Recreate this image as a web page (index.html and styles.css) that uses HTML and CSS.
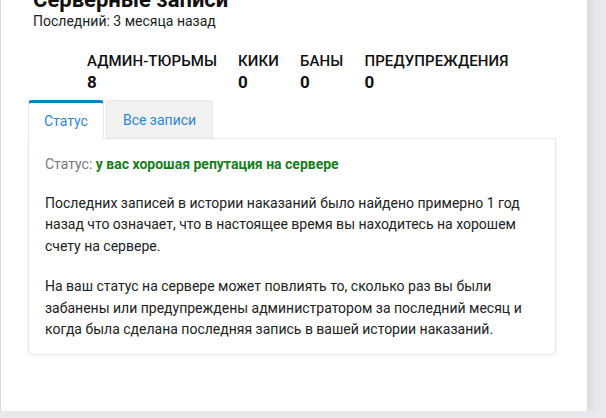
FILE: index.html
```html
<!DOCTYPE html>
<html lang="ru">
<head>
  <meta charset="UTF-8">
  <meta name="viewport" content="width=device-width, initial-scale=1.0">
  <title>Серверные записи</title>
  <link rel="stylesheet" href="styles.css">
</head>
<body>
    <div class="card">
        <h1>Серверные записи</h1>
        <p class="subtitle">Последний: 3 месяца назад</p>

        <!-- Punishment counters -->
        <div class="stats">
            <div class="stat">
                <span class="stat-label">Админ-тюрьмы</span>
                <span class="stat-value">8</span>
            </div>
            <div class="stat">
                <span class="stat-label">Кики</span>
                <span class="stat-value">0</span>
            </div>
            <div class="stat">
                <span class="stat-label">Баны</span>
                <span class="stat-value">0</span>
            </div>
            <div class="stat">
                <span class="stat-label">Предупреждения</span>
                <span class="stat-value">0</span>
            </div>
        </div>

        <!-- Tabs -->
        <div class="tabs">
            <button type="button" class="tab active">Статус</button>
            <button type="button" class="tab">Все записи</button>
        </div>

        <div class="tab-panel">
            <p class="status">Статус: <span class="status-good">у вас хорошая репутация на сервере</span></p>
            <p>Последних записей в истории наказаний было найдено примерно 1 год назад что означает, что в настоящее время вы находитесь на хорошем счету на сервере.</p>
            <p>На ваш статус на сервере может повлиять то, сколько раз вы были забанены или предупреждены администратором за последний месяц и когда была сделана последняя запись в вашей истории наказаний.</p>
        </div>
    </div>
</body>
</html>
```

FILE: styles.css
```css
/* General Styling */
body {
    font-family: 'Roboto', 'Liberation Sans', sans-serif;
    background-color: #e8e9ed;
    margin: 0;
    padding: 0 19px 0 1px;
    color: #222;
}

.card {
    background: #ffffff;
    margin-top: -13px;
    padding: 0 31px 56px 27px;
    box-shadow: 0 4px 14px rgba(0, 0, 0, 0.12);
}

h1 {
    margin: 0;
    padding-left: 5px;
    font-size: 22px;
    line-height: 26px;
    font-weight: bold;
    color: #111;
}

.subtitle {
    margin: 0;
    padding-left: 5px;
    font-size: 14px;
    line-height: 16px;
    color: #222;
}

/* Counters row */
.stats {
    display: flex;
    gap: 21px;
    margin: 23px 0 8px 59px;
}

.stat {
    display: flex;
    flex-direction: column;
}

.stat-label {
    text-transform: uppercase;
    font-size: 15px;
    line-height: 18px;
    font-weight: 500;
    letter-spacing: 0.1px;
    color: #111;
}

.stat-value {
    margin-top: 2px;
    font-size: 17px;
    line-height: 20px;
    font-weight: bold;
    color: #111;
}

/* Tabs */
.tabs {
    display: flex;
    gap: 2px;
}

.tab {
    font-family: inherit;
    font-size: 14px;
    line-height: 16px;
    padding: 11px 16px 10px;
    color: #2b88d8;
    background-color: #f2f2f2;
    border: 1px solid #e8e8e8;
    border-bottom: none;
    border-radius: 4px 4px 0 0;
    cursor: pointer;
}

.tab.active {
    background-color: #ffffff;
    border-top: 3px solid #0b84cf;
    padding: 9px 15px 10px;
    position: relative;
    margin-bottom: -1px;
}

.tab-panel {
    border: 1px solid #e6e6e6;
    border-radius: 0 0 4px 4px;
    padding: 15px 16px 13px;
    box-shadow: 0 1px 3px rgba(0, 0, 0, 0.05);
    font-size: 14px;
    line-height: 21.5px;
}

.tab-panel p {
    margin: 0 0 19px;
}

.tab-panel p:last-child {
    margin-bottom: 0;
}

.tab-panel .status {
    margin-bottom: 17px;
    color: #777;
}

.status-good {
    color: #15801b;
    font-weight: bold;
}
```
